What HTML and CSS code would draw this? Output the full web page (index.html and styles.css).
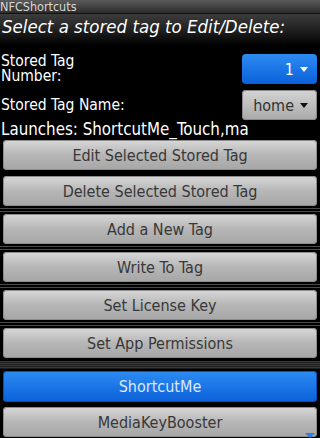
FILE: index.html
```html
<!DOCTYPE html>
<html>
<head>
<meta charset="utf-8">
<link rel="stylesheet" href="styles.css">
</head>
<body>
<div class="titlebar">NFCShortcuts</div>
<div class="header">Select a stored tag to Edit/Delete:</div>
<div class="form">
  <div class="row row1">
    <div class="label">Stored Tag<br>Number:</div>
    <div class="dropdown blue"><span>1</span><span class="tri"></span></div>
  </div>
  <div class="row row2">
    <div class="label">Stored Tag Name:</div>
    <div class="dropdown grey"><span>home</span><span class="tri"></span></div>
  </div>
  <div class="launches">Launches: ShortcutMe_Touch,ma</div>
</div>
<div class="group first">
  <div class="btn">Edit Selected Stored Tag</div>
  <div class="btn">Delete Selected Stored Tag</div>
</div>
<div class="sep"></div>
<div class="group"><div class="btn">Add a New Tag</div></div>
<div class="sep"></div>
<div class="group"><div class="btn">Write To Tag</div></div>
<div class="sep"></div>
<div class="group"><div class="btn">Set License Key</div></div>
<div class="sep"></div>
<div class="group"><div class="btn">Set App Permissions</div></div>
<div class="band"></div>
<div class="group last">
  <div class="btn selected">ShortcutMe</div>
  <div class="btn">MediaKeyBooster</div>
</div>
<div class="scroll-arrow"></div>
</body>
</html>
```
FILE: styles.css
```css
html, body {
  margin: 0;
  padding: 0;
  background: #000;
  width: 320px;
  height: 438px;
  overflow: hidden;
  font-family: "DejaVu Sans Condensed", "DejaVu Sans", "Liberation Sans", sans-serif;
  font-stretch: condensed;
  position: relative;
}
.titlebar {
  height: 13px;
  line-height: 13px;
  font-size: 12.5px;
  color: #d8d8d8;
  background: linear-gradient(#5a5a5a, #2c2c2c);
  border-bottom: 1px solid #111;
  overflow: visible;
  white-space: nowrap;
}
.header {
  height: 32px;
  box-sizing: border-box;
  padding: 1px 0 0 2px;
  font-size: 18.5px;
  line-height: 23px;
  font-style: italic;
  color: #fff;
  background: linear-gradient(#3c3c3c, #1a1a1a 60%, #000);
}
.form {
  padding: 8px 3px 0 1px;
  color: #fff;
}
.row {
  display: flex;
  justify-content: space-between;
  align-items: center;
}
.row1 { height: 30px; }
.row2 { height: 30px; margin-top: 6px; }
.label {
  font-size: 15.5px;
  line-height: 15px;
}
.dropdown {
  width: 75px;
  height: 30px;
  box-sizing: border-box;
  border-radius: 4px;
  display: flex;
  align-items: center;
  justify-content: flex-end;
  gap: 6px;
  padding-right: 9px;
  font-size: 16px;
}
.dropdown.blue {
  background: linear-gradient(#2d8cf2, #0b60da);
  color: #fff;
}
.dropdown.grey {
  background: linear-gradient(#d4d4d4, #a9a9a9);
  color: #333;
  box-shadow: inset 0 0 0 1px #8a8a8a;
}
.tri {
  width: 0;
  height: 0;
  border-left: 4px solid transparent;
  border-right: 4px solid transparent;
  border-top: 5px solid currentColor;
}
.dropdown.grey .tri { border-top-color: #111; }
.launches {
  font-size: 16.8px;
  line-height: 18px;
}
.group {
  display: flex;
  flex-direction: column;
  gap: 6px;
  padding: 2px 3px;
}
.group.last { gap: 5px; }
.btn {
  height: 30px;
  flex: none;
  box-sizing: border-box;
  border-radius: 4px;
  background: linear-gradient(#d8d8d8, #b6b6b6 50%, #a6a6a6);
  box-shadow: inset 0 0 0 1px #8c8c8c;
  color: #383838;
  font-size: 16px;
  display: flex;
  align-items: center;
  justify-content: center;
}
.btn.selected {
  height: 31px;
  background: linear-gradient(#2d8cf2, #0b60da);
  box-shadow: inset 0 0 0 1px #0a4fb5;
  color: #dce9ff;
}
.sep {
  height: 4px;
  border-top: 1px solid #4a4a4a;
  border-bottom: 1px solid #4a4a4a;
  box-sizing: border-box;
}
.band {
  height: 8px;
  margin-top: 1px;
  background: repeating-linear-gradient(#3a3a3a 0 1px, #1e1e1e 1px 2px);
}
.scroll-arrow {
  position: absolute;
  right: 5px;
  bottom: 0;
  width: 0;
  height: 0;
  border-left: 5px solid transparent;
  border-right: 5px solid transparent;
  border-top: 5px solid #2d7fe0;
}
```
